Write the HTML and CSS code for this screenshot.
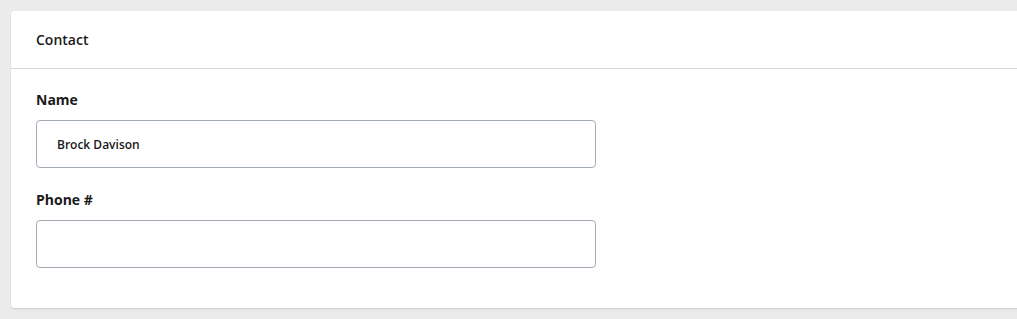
FILE: index.html
```html
<!DOCTYPE html>
<html>
<head>
<meta charset="utf-8">
<link rel="stylesheet" href="styles.css">
</head>
<body>
<div class="card">
  <div class="card-header">Contact</div>
  <div class="card-body">
    <div class="field">
      <label class="label">Name</label>
      <div class="input">Brock Davison</div>
    </div>
    <div class="field">
      <label class="label">Phone #</label>
      <div class="input"></div>
    </div>
  </div>
</div>
</body>
</html>
```

FILE: styles.css
```css
html, body {
  margin: 0;
  padding: 0;
}
body {
  background: #ebebeb;
  font-family: "Open Sans", "Noto Sans", sans-serif;
  color: #1a1a1a;
  overflow: hidden;
  padding: 11px 0 0 11px;
  height: 319px;
  box-sizing: border-box;
}
.card {
  background: #ffffff;
  border-radius: 4px;
  margin-right: -20px;
  box-shadow: 0 1px 2px rgba(0,0,0,0.12);
}
.card-header {
  height: 58px;
  box-sizing: border-box;
  padding: 0 25px 1px;
  display: flex;
  align-items: center;
  font-size: 14px;
  font-weight: 600;
  border-bottom: 1px solid #d3d6db;
}
.card-body {
  padding: 21px 25px 40px;
}
.field + .field {
  margin-top: 22px;
}
.label {
  display: block;
  font-size: 14px;
  font-weight: 700;
  line-height: 20px;
  margin-bottom: 10px;
}
.input {
  width: 560px;
  height: 48px;
  box-sizing: border-box;
  border: 1px solid #a2abb4;
  border-radius: 4px;
  padding: 0 20px;
  display: flex;
  align-items: center;
  font-size: 12px;
  font-weight: 600;
}
```
